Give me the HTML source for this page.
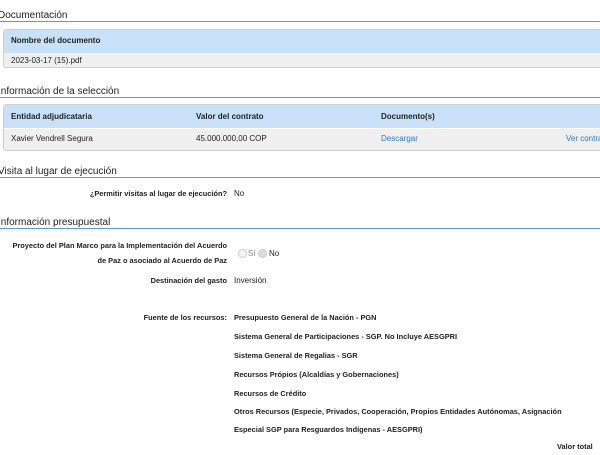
<!DOCTYPE html>
<html><head><meta charset="utf-8"><style>
*{margin:0;padding:0;box-sizing:border-box}
body{width:600px;height:455px;overflow:hidden;background:#fff;font-family:"Liberation Sans",Arial,sans-serif;color:#222;position:relative}
.a{position:absolute;white-space:nowrap}
.h{font-size:10px;color:#222}
.ln{position:absolute;left:0;width:600px;height:1px;background:#5b9ae0}
.b{font-weight:bold;font-size:8px}
.l{font-weight:bold;font-size:7.4px}
.t{font-size:8px}
.box{position:absolute;left:3px;width:600px;border:1px solid #cfcfcf;border-radius:3px;overflow:hidden;background:#efefef}
.hd{background:#c8e1f8}
a{color:#2a7ae2;text-decoration:none}
.rad{position:absolute;width:9px;height:9px;border-radius:50%;border:1px solid #ccc;background:#f5f5f5}
</style></head><body>
<div class="a h" style="left:-2px;top:10px">Documentación</div>
<div class="ln" style="top:21px"></div>
<div class="box" style="top:29px;height:39px">
 <div class="hd" style="height:23px"></div>
</div>
<div class="a b" style="left:11px;top:36px">Nombre del documento</div>
<div class="a t" style="left:11px;top:56px">2023-03-17 (15).pdf</div>

<div class="a h" style="left:-2px;top:86px">Información de la selección</div>
<div class="ln" style="top:97px"></div>
<div class="box" style="top:104px;height:47px">
 <div class="hd" style="height:24px;border-bottom:1px solid #fff"></div>
</div>
<div class="a b" style="left:11px;top:112px">Entidad adjudicataria</div>
<div class="a b" style="left:196px;top:112px">Valor del contrato</div>
<div class="a b" style="left:381px;top:112px">Documento(s)</div>
<div class="a t" style="left:11px;top:134px">Xavier Vendrell Segura</div>
<div class="a t" style="left:196px;top:134px">45.000.000,00 COP</div>
<div class="a t" style="left:381px;top:134px"><a>Descargar</a></div>
<div class="a t" style="left:566px;top:134px"><a>Ver contrato</a></div>

<div class="a h" style="left:-2px;top:166px">Visita al lugar de ejecución</div>
<div class="ln" style="top:177px"></div>
<div class="a l" style="right:373px;top:189px">¿Permitir visitas al lugar de ejecución?</div>
<div class="a t" style="left:234px;top:189px">No</div>

<div class="a h" style="left:-2px;top:217px">Información presupuestal</div>
<div class="ln" style="top:228px"></div>
<div class="a l" style="right:373px;top:241px">Proyecto del Plan Marco para la Implementación del Acuerdo</div>
<div class="a l" style="right:373px;top:256px">de Paz o asociado al Acuerdo de Paz</div>
<div class="rad" style="left:238px;top:249px"></div>
<div class="a t" style="left:248px;top:249px;color:#888;line-height:10px">Sí</div>
<div class="rad" style="left:258px;top:249px;background:#ddd"></div>
<div class="a t" style="left:269px;top:249px;line-height:10px">No</div>
<div class="a l" style="right:373px;top:276px">Destinación del gasto</div>
<div class="a t" style="left:234px;top:276px">Inversión</div>
<div class="a l" style="right:373px;top:313px">Fuente de los recursos:</div>
<div class="a l" style="left:234px;top:313px">Presupuesto General de la Nación - PGN</div>
<div class="a l" style="left:234px;top:332px">Sistema General de Participaciones - SGP. No Incluye AESGPRI</div>
<div class="a l" style="left:234px;top:351px">Sistema General de Regalias - SGR</div>
<div class="a l" style="left:234px;top:370px">Recursos Própios (Alcaldías y Gobernaciones)</div>
<div class="a l" style="left:234px;top:389px">Recursos de Crédito</div>
<div class="a l" style="left:234px;top:407px">Otros Recursos (Especie, Privados, Cooperación, Propios Entidades Autónomas, Asignación</div>
<div class="a l" style="left:234px;top:425px">Especial SGP para Resguardos Indígenas - AESGPRI)</div>
<div class="a l" style="left:557px;top:442px">Valor total</div>
</body></html>
